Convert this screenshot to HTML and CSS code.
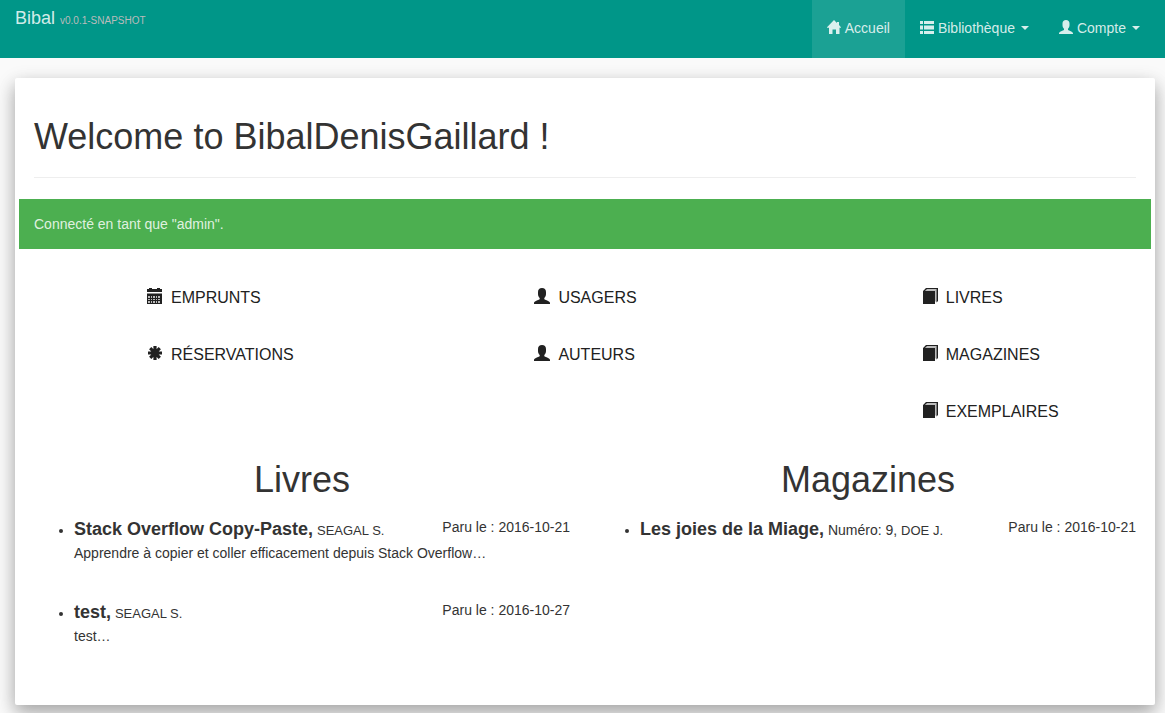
FILE: index.html
```html
<!DOCTYPE html>
<html lang="fr">
<head>
<meta charset="utf-8">
<meta name="viewport" content="width=device-width, initial-scale=1">
<title>Bibal</title>
<link rel="stylesheet" href="styles.css">
</head>
<body>
<svg class="sprite" aria-hidden="true">
  <symbol id="home" viewBox="0 0 14 14"><path d="M7 0L10 3V2h2v3l2.500 2.800H12.500V14H9V9.500H5.500V14H2V7.800H-.5z"/></symbol>
  <symbol id="list" viewBox="0 0 14 14"><path d="M0 1h3v3H0zM4 1h10v3H4zM0 11h3v3H0zM4 11h10v3H4z"/><path d="M0 5h3v1H0zM4 5h10v1H4zM0 9h3v1H0zM4 9h10v1H4z" opacity=".5"/><path d="M0 6h3v3H0zM4 6h10v3H4z"/></symbol>
  <symbol id="user" viewBox="0 0 16 16"><path d="M8 0c2.500 0 4 1.600 4 4v2c0 1.700-.7 3-1.700 4v1.300c1.300.9 5.700 1.800 5.700 3.700v1H0v-1c0-1.900 4.400-2.800 5.700-3.700V10C4.700 9 4 7.700 4 6V4c0-2.400 1.500-4 4-4z"/></symbol>
  <symbol id="calendar" viewBox="0 0 16 16"><path d="M0 4V1h2V0h3v1h5V0h3v1h2v3zM0 5.500h15V16H0z"/><path d="M1 8h2v2H1zm3 0h1v2H4zm2 0h2v2H6zm3 0h1v2H9zm2 0h2v2h-2zM1 11h2v1H1zm3 0h1v1H4zm2 0h2v1H6zm3 0h1v1H9zm2 0h2v1h-2zM1 13h2v2H1zm3 0h1v2H4zm2 0h2v2H6zm3 0h1v2H9zm2 0h2v2h-2z" fill="#bbb"/></symbol>
  <symbol id="asterisk" viewBox="0 0 16 16"><path d="M8 1v14M1 8h14M3.200 3.200l9.600 9.600M12.800 3.200l-9.600 9.600" fill="none" stroke="currentColor" stroke-width="3.200"/></symbol>
  <symbol id="book" viewBox="0 0 16 16"><path d="M1 3h12v13H1z"/><path d="M1 3L4 0h12v13l-1.500 1.500V1H5L3 3z"/><path d="M3 3l1.500-2h10v12.500H13V3z" opacity=".3"/></symbol>
</svg>
<header class="navbar">
  <a class="brand" href="#">Bibal <small class="version">v0.0.1-SNAPSHOT</small></a>
  <nav class="menu">
    <a class="menu-item active" href="#"><svg class="icon"><use href="#home"/></svg>Accueil</a>
    <button class="menu-item" type="button"><svg class="icon"><use href="#list"/></svg>Bibliothèque<span class="caret"></span></button>
    <button class="menu-item" type="button"><svg class="icon"><use href="#user"/></svg>Compte<span class="caret"></span></button>
  </nav>
</header>
<main class="card">
  <h1 class="page-title">Welcome to BibalDenisGaillard !</h1>
  <div class="alert" role="status">Connecté en tant que "admin".</div>
  <div class="shortcuts">
    <div class="shortcut-column">
      <a class="shortcut" href="#"><svg class="icon-large"><use href="#calendar"/></svg>EMPRUNTS</a>
      <a class="shortcut" href="#"><svg class="icon-large"><use href="#asterisk"/></svg>RÉSERVATIONS</a>
    </div>
    <div class="shortcut-column">
      <a class="shortcut" href="#"><svg class="icon-large"><use href="#user"/></svg>USAGERS</a>
      <a class="shortcut" href="#"><svg class="icon-large"><use href="#user"/></svg>AUTEURS</a>
    </div>
    <div class="shortcut-column">
      <a class="shortcut" href="#"><svg class="icon-large"><use href="#book"/></svg>LIVRES</a>
      <a class="shortcut" href="#"><svg class="icon-large"><use href="#book"/></svg>MAGAZINES</a>
      <a class="shortcut" href="#"><svg class="icon-large"><use href="#book"/></svg>EXEMPLAIRES</a>
    </div>
  </div>
  <div class="catalogue">
    <section class="section">
      <h2 class="section-title">Livres</h2>
      <ul class="works">
        <li class="work">
          <div class="work-head"><span><strong class="work-title">Stack Overflow Copy-Paste,</strong> <span class="author">SEAGAL S.</span></span><span class="date">Paru le : 2016-10-21</span></div>
          <p class="summary">Apprendre à copier et coller efficacement depuis Stack Overflow…</p>
        </li>
        <li class="work">
          <div class="work-head"><span><strong class="work-title">test,</strong> <span class="author">SEAGAL S.</span></span><span class="date">Paru le : 2016-10-27</span></div>
          <p class="summary">test…</p>
        </li>
      </ul>
    </section>
    <section class="section">
      <h2 class="section-title">Magazines</h2>
      <ul class="works">
        <li class="work">
          <div class="work-head"><span><strong class="work-title">Les joies de la Miage,</strong> Numéro: 9, <span class="author">DOE J.</span></span><span class="date">Paru le : 2016-10-21</span></div>
        </li>
      </ul>
    </section>
  </div>
</main>
</body>
</html>
```
FILE: styles.css
```css
* {
  box-sizing: border-box;
}

body {
  margin: 0;
  background: #fafafa;
  color: #333;
  font: 14px/20px "Liberation Sans", Arial, sans-serif;
}

a {
  color: inherit;
  text-decoration: none;
}

svg {
  fill: currentColor;
}

.sprite {
  position: absolute;
  width: 0;
  height: 0;
}

.navbar {
  display: flex;
  justify-content: space-between;
  height: 58px;
  padding: 0 10px 0 15px;
  background: #009688;
  color: rgba(255, 255, 255, 0.84);
}

.brand {
  padding-top: 8px;
  font-size: 18px;
}

.version {
  color: #bbb;
  font-size: 10px;
}

.menu {
  display: flex;
}

.menu-item {
  display: flex;
  align-items: center;
  gap: 4px;
  padding: 0 15px 2px;
  border: 0;
  background: none;
  color: inherit;
  font: inherit;
}

.active {
  background: #1ba194;
}

.icon {
  width: 14px;
  height: 14px;
  margin-bottom: 2px;
  overflow: visible;
}

.caret {
  margin-left: 2px;
  border: 4px solid transparent;
  border-top-color: currentColor;
  border-bottom: 0;
}

.card {
  margin: 20px 10px 8px 15px;
  padding: 36px 4px 22px;
  border-radius: 2px;
  background: #fff;
  box-shadow: 0 8px 17px rgba(0, 0, 0, 0.2), 0 6px 20px rgba(0, 0, 0, 0.19);
}

.page-title {
  margin: 0 15px 21px;
  padding-bottom: 18px;
  border-bottom: 1px solid #eee;
  font-size: 36px;
  font-weight: 400;
  line-height: 45px;
}

.alert {
  padding: 15px;
  background: #4caf50;
  color: rgba(255, 255, 255, 0.84);
}

.shortcuts {
  display: grid;
  grid-template-columns: 387fr 387fr 229fr;
  padding: 39px 0 38px;
  margin-left: 128px;
  color: #212121;
}

.shortcut-column {
  display: flex;
  flex-direction: column;
  align-items: flex-start;
  gap: 37px;
}

.shortcut {
  display: flex;
  align-items: flex-start;
  gap: 8px;
  font-size: 16px;
}

.icon-large {
  width: 16px;
  height: 16px;
}

.catalogue {
  display: grid;
  grid-template-columns: 1fr 1fr;
}

.section {
  padding: 0 15px;
}

.section-title {
  margin: 0 0 17px;
  font-size: 36px;
  font-weight: 400;
  line-height: 40px;
  text-align: center;
}

.works {
  margin: 0;
  padding-left: 40px;
}

.work {
  min-height: 83px;
}

.work-head {
  display: flex;
  justify-content: space-between;
  line-height: 24px;
}

.work-title {
  font-size: 18px;
}

.author {
  font-size: 13px;
}

.date {
  line-height: 20px;
}

.summary {
  margin: 0;
}
```
